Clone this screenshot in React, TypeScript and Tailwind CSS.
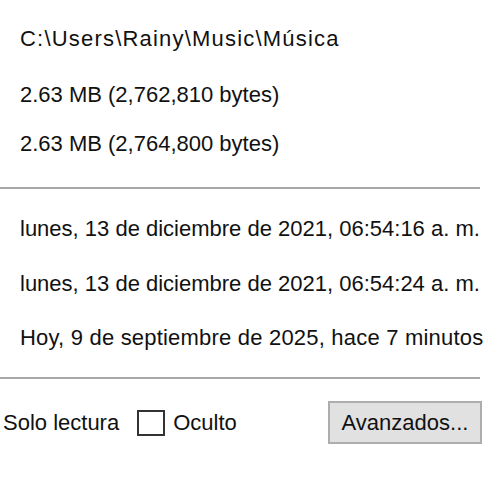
import React from 'react';

const pathRows = [
  { text: 'C:\\Users\\Rainy\\Music\\Música', cls: 'mt-0 tracking-[1.2px]' },
  { text: '2.63 MB (2,762,810 bytes)', cls: 'mt-[28px]' },
  { text: '2.63 MB (2,764,800 bytes)', cls: 'mt-[21px]' },
];

const dateRows = [
  { text: 'lunes, 13 de diciembre de 2021, 06:54:16 a. m.', cls: 'mt-[26px]' },
  { text: 'lunes, 13 de diciembre de 2021, 06:54:24 a. m.', cls: 'mt-[27px]' },
  { text: 'Hoy, 9 de septiembre de 2025, hace 7 minutos', cls: 'mt-[26px] tracking-[0.2px]' },
];

const App: React.FC = () => {
  return (
    <div className="w-[500px] h-[500px] bg-white text-[#111111] overflow-hidden font-['Liberation_Sans',Arial,sans-serif] text-[22px] leading-[28px]">
      <div className="pt-[25px]">
        {/* location and sizes */}
        {pathRows.map((r) => (
          <div key={r.text} className={`${r.cls} pl-[20px] h-[28px] whitespace-nowrap`}>
            {r.text}
          </div>
        ))}

        <div className="mt-[29px] w-[480px] h-[2px] bg-[#a8a8a8]" />

        {/* created / modified / accessed */}
        {dateRows.map((r) => (
          <div key={r.text} className={`${r.cls} pl-[20px] h-[28px] whitespace-nowrap`}>
            {r.text}
          </div>
        ))}

        <div className="mt-[25px] w-[480px] h-[2px] bg-[#a8a8a8]" />

        {/* attributes */}
        <div className="mt-[22px] h-[43px] flex items-center pr-[18px]">
          <span className="pl-[3px] whitespace-nowrap">Solo lectura</span>
          <span className="ml-[18px] w-[28px] h-[26px] border-2 border-[#333333] bg-white shrink-0" />
          <span className="ml-[8px] whitespace-nowrap">Oculto</span>
          <button className="ml-auto w-[154px] h-[43px] bg-[#e1e1e1] border-2 border-[#adadad] text-[#111111] text-[22px] leading-[28px]">
            Avanzados...
          </button>
        </div>
      </div>
    </div>
  );
};

export default App;
